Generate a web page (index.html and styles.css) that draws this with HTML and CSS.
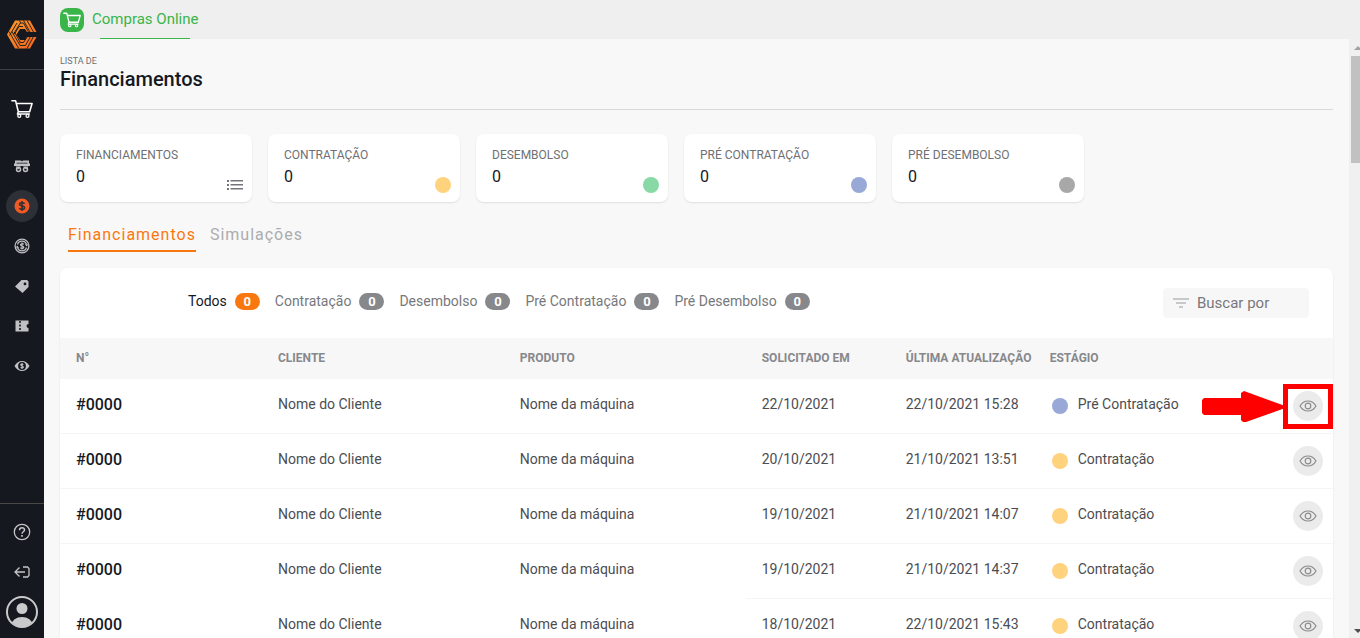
FILE: index.html
```html
<!DOCTYPE html>
<html lang="pt-BR">
<head>
  <meta charset="UTF-8" />
  <meta name="viewport" content="width=device-width, initial-scale=1.0"/>
  <title>Financiamentos - Compras Online</title>
  <link rel="stylesheet" href="styles.css">
</head>
<body>
  <!-- Icons used more than once -->
  <svg class="sprite" aria-hidden="true">
    <symbol id="cart" viewBox="0 0 24 24">
      <path d="M1 3h4l3 12h12.500M5.700 6H23l-2.500 8.500M8 15l-1 2.500h13" fill="none" stroke="currentColor" stroke-width="1.700" stroke-linejoin="round" stroke-linecap="round"/>
      <circle cx="9" cy="19.500" r="1.600" fill="none" stroke="currentColor" stroke-width="1.400"/>
      <circle cx="18" cy="19.500" r="1.600" fill="none" stroke="currentColor" stroke-width="1.400"/>
    </symbol>
    <symbol id="eye" viewBox="0 0 18 12">
      <path d="M1 6C3 2.600 5.700 1 9 1s6 1.600 8 5c-2 3.400-4.700 5-8 5S3 9.400 1 6z" fill="none" stroke="currentColor" stroke-width="1.200"/>
      <circle cx="9" cy="6" r="2.800" fill="none" stroke="currentColor" stroke-width="1.200"/>
    </symbol>
  </svg>

  <nav class="sidebar" aria-label="Menu principal">
    <a href="#" class="logo" aria-label="Início">
      <svg width="30" height="29" viewBox="0 0 30 29">
        <defs>
          <linearGradient id="logoFill" x1="0" y1="0" x2="1" y2="1">
            <stop offset="0" stop-color="#fb9a2a"/>
            <stop offset="1" stop-color="#f0641e"/>
          </linearGradient>
        </defs>
        <path fill="url(#logoFill)" d="M8 .5h15l6.500 11.500h-9.500L18 9h-5l-3.500 5.500L13 20h5l2-3h9.500L23 28.500H8l-8-14z"/>
        <g fill="none" stroke="#15181f" stroke-width=".9">
          <path d="M12.500 .5l1 2.200L6 15M10 3L2.500 15.500M16 6.500h-4L7.500 14"/>
          <path d="M13 3h3.500l5 9M16.500 .5l6.500 11.500M20 .5l6.500 11.500"/>
          <path d="M2 11.500L11.500 28M5 11.500l8 14M7.500 12l5.500 10"/>
          <path d="M12.500 22.500h4l4-6M13 25.500h5.500l5-9M20 28.500l6.500-12"/>
        </g>
      </svg>
    </a>
    <a href="#" class="shop" aria-label="Compras">
      <svg width="22" height="22"><use href="#cart"/></svg>
    </a>
    <div class="menu">
      <a href="#" aria-label="Máquinas">
        <svg width="16" height="16" viewBox="0 0 16 16" fill="#bfc1c4">
          <path d="M1 2.500h6l1 1 1-1h6v3h1v2.500H0V5.500h1z"/>
          <path d="M2.500 5.200h11" stroke="#15181f" stroke-width=".8"/>
          <path d="M1.500 8.500H7L4 11.500zM14.500 8.500H9l3 3z"/>
          <circle cx="4.500" cy="11.500" r="2" fill="none" stroke="#bfc1c4" stroke-width="1.500"/>
          <circle cx="11.500" cy="11.500" r="2" fill="none" stroke="#bfc1c4" stroke-width="1.500"/>
        </svg>
      </a>
      <a href="#" class="active" aria-label="Financiamentos">
        <svg width="16" height="16" viewBox="0 0 16 16">
          <circle cx="8" cy="8" r="7.500" fill="#f15a24"/>
          <path d="M10.500 5.800C10 4.900 9.200 4.700 8 4.700c-1.500 0-2.500.5-2.500 1.600C5.500 8.800 10.600 7 10.600 9.700c0 1.100-1.100 1.700-2.600 1.700-1.300 0-2.200-.5-2.600-1.400M8 3v10" fill="none" stroke="#2d3036" stroke-width="1.500"/>
        </svg>
      </a>
      <a href="#" aria-label="Consórcios">
        <svg width="16" height="16" viewBox="0 0 16 16" fill="none" stroke="#bfc1c4">
          <circle cx="8" cy="8" r="6.900" stroke-width="1.300"/>
          <path d="M3.500 9.500a4.700 4.700 0 0 0 9 0M12.500 6.500a4.700 4.700 0 0 0-9 0" stroke-width="1.200"/>
          <path d="M1.500 9.500l2-2 1.500 2.500zM14.500 6.500l-2 2L11 6z" fill="#bfc1c4" stroke="none"/>
          <path d="M9.800 6.400C8.500 5 6.300 5.800 6.500 7c.2 1.300 3.300.8 3.300 2.200 0 1.200-2.400 1.600-3.500.4M8 4.500v7" stroke-width="1.200"/>
        </svg>
      </a>
      <a href="#" aria-label="Ofertas">
        <svg width="16" height="16" viewBox="0 0 16 16">
          <path fill="#bfc1c4" fill-rule="evenodd" d="M7.500 2H13l1.500 1.500V9L8.500 15 1 8.500zM11 4.500a1.400 1.400 0 1 0 0 2.800 1.400 1.400 0 0 0 0-2.800z"/>
        </svg>
      </a>
      <a href="#" aria-label="Cupons">
        <svg width="16" height="16" viewBox="0 0 16 16">
          <path fill="#bfc1c4" d="M1.500 2.500h13v3.500a2 2 0 0 0 0 4v3.500h-13z"/>
          <path d="M6 3v10.500" stroke="#15181f" stroke-width="1.600" stroke-dasharray="2 1.500"/>
        </svg>
      </a>
      <a href="#" aria-label="Acompanhar">
        <svg width="16" height="16" viewBox="0 0 16 16">
          <path fill="#bfc1c4" d="M.5 8C2.500 4.500 5 3 8 3s5.500 1.500 7.500 5c-2 3.500-4.500 5-7.500 5S2.500 11.500.5 8z"/>
          <circle cx="8" cy="8" r="3.900" fill="#15181f"/>
          <path d="M9.400 6.600C8.300 5.500 6.600 6 6.700 7c.1 1.100 2.700.8 2.700 2 0 1-1.900 1.300-2.800.3M8 5v6" fill="none" stroke="#bfc1c4" stroke-width="1.100"/>
        </svg>
      </a>
    </div>
    <div class="menu menu-bottom">
      <a href="#" aria-label="Ajuda">
        <svg width="18" height="18" viewBox="0 0 18 18" fill="none" stroke="#c4c5c7" stroke-width="1.300">
          <circle cx="9" cy="9" r="7.700"/>
          <path d="M6.500 7.200C6.500 5.600 7.600 4.700 9 4.700s2.500.9 2.500 2.200c0 1.800-2.500 1.900-2.500 3.800" stroke-width="1.500"/>
          <path d="M9 12v1.700" stroke-width="1.700"/>
        </svg>
      </a>
      <a href="#" aria-label="Sair">
        <svg width="16" height="16" viewBox="0 0 16 16" fill="none" stroke="#c4c5c7" stroke-width="1.300">
          <path d="M11 8H1M5.500 3.500L1 8l4.500 4.500M9 3h4.500l1.500 1.500v7L13.500 13H9"/>
        </svg>
      </a>
      <a href="#" aria-label="Meu perfil">
        <svg width="32" height="32" viewBox="0 0 32 32">
          <defs><clipPath id="face"><circle cx="16" cy="16" r="14.500"/></clipPath></defs>
          <circle cx="16" cy="16" r="15" fill="none" stroke="#c9cacb" stroke-width="2"/>
          <circle cx="16" cy="12.500" r="5.500" fill="#c9cacb"/>
          <ellipse cx="16" cy="29" rx="10.500" ry="8" fill="#c9cacb" clip-path="url(#face)"/>
        </svg>
      </a>
    </div>
  </nav>

  <div class="page">
    <header class="topbar">
      <a href="#" class="app-link">
        <span class="app-icon"><svg width="18" height="18"><use href="#cart"/></svg></span>
        <span class="app-name">Compras Online</span>
      </a>
    </header>

    <div class="scroll-area">
      <main class="content">
        <div class="heading">
          <p>LISTA DE</p>
          <h1>Financiamentos</h1>
        </div>

        <section class="cards">
          <div class="card">
            <h2>FINANCIAMENTOS</h2>
            <div class="card-value">0</div>
            <svg class="card-mark" width="16" height="16" viewBox="0 0 16 16" fill="#77737c">
              <path d="M0 3h2v2H0zM0 7h2v2H0zM0 11h2v2H0zM3.500 3H16v1.600H3.500zM3.500 7H16v1.600H3.500zM3.500 11H16v1.600H3.500z"/>
            </svg>
          </div>
          <div class="card">
            <h2>CONTRATAÇÃO</h2>
            <div class="card-value">0</div>
            <span class="card-mark dot yellow"></span>
          </div>
          <div class="card">
            <h2>DESEMBOLSO</h2>
            <div class="card-value">0</div>
            <span class="card-mark dot green"></span>
          </div>
          <div class="card">
            <h2>PRÉ CONTRATAÇÃO</h2>
            <div class="card-value">0</div>
            <span class="card-mark dot blue"></span>
          </div>
          <div class="card">
            <h2>PRÉ DESEMBOLSO</h2>
            <div class="card-value">0</div>
            <span class="card-mark dot gray"></span>
          </div>
        </section>

        <div class="tabs">
          <a href="#" class="active">Financiamentos</a>
          <a href="#">Simulações</a>
        </div>

        <section class="panel">
          <div class="toolbar">
            <div class="filters">
              <button class="active">Todos <span>0</span></button>
              <button>Contratação <span>0</span></button>
              <button>Desembolso <span>0</span></button>
              <button>Pré Contratação <span>0</span></button>
              <button>Pré Desembolso <span>0</span></button>
            </div>
            <label class="search">
              <svg width="16" height="16" viewBox="0 0 16 16" fill="none" stroke="#98999b" stroke-width="1.200">
                <path d="M0 4h16M3 8h10M6 12h4"/>
              </svg>
              <input type="text" placeholder="Buscar por" aria-label="Buscar por">
            </label>
          </div>

          <table>
            <colgroup>
              <col class="col-number"><col class="col-name"><col class="col-name"><col class="col-date"><col class="col-date"><col><col class="col-action">
            </colgroup>
            <thead>
              <tr>
                <th>N°</th>
                <th>CLIENTE</th>
                <th>PRODUTO</th>
                <th>SOLICITADO EM</th>
                <th>ÚLTIMA ATUALIZAÇÃO</th>
                <th>ESTÁGIO</th>
                <th></th>
              </tr>
            </thead>
            <tbody>
              <tr>
                <td class="number">#0000</td>
                <td>Nome do Cliente</td>
                <td>Nome da máquina</td>
                <td>22/10/2021</td>
                <td>22/10/2021 15:28</td>
                <td><span class="stage"><span class="dot blue"></span>Pré Contratação</span></td>
                <td class="action">
                  <button aria-label="Visualizar"><svg width="18" height="12"><use href="#eye"/></svg></button>
                  <svg class="arrow" width="86" height="32" viewBox="0 0 86 32"><path fill="#fe0000" d="M2 7h37V2l3-2 44 16-42 15h-3l-2-2v-5H2l-2-2V9z"/></svg>
                  <span class="highlight"></span>
                </td>
              </tr>
              <tr>
                <td class="number">#0000</td>
                <td>Nome do Cliente</td>
                <td>Nome da máquina</td>
                <td>20/10/2021</td>
                <td>21/10/2021 13:51</td>
                <td><span class="stage"><span class="dot yellow"></span>Contratação</span></td>
                <td class="action"><button aria-label="Visualizar"><svg width="18" height="12"><use href="#eye"/></svg></button></td>
              </tr>
              <tr>
                <td class="number">#0000</td>
                <td>Nome do Cliente</td>
                <td>Nome da máquina</td>
                <td>19/10/2021</td>
                <td>21/10/2021 14:07</td>
                <td><span class="stage"><span class="dot yellow"></span>Contratação</span></td>
                <td class="action"><button aria-label="Visualizar"><svg width="18" height="12"><use href="#eye"/></svg></button></td>
              </tr>
              <tr class="open">
                <td class="number">#0000</td>
                <td>Nome do Cliente</td>
                <td>Nome da máquina</td>
                <td>19/10/2021</td>
                <td>21/10/2021 14:37</td>
                <td><span class="stage"><span class="dot yellow"></span>Contratação</span></td>
                <td class="action"><button aria-label="Visualizar"><svg width="18" height="12"><use href="#eye"/></svg></button></td>
              </tr>
              <tr>
                <td class="number">#0000</td>
                <td>Nome do Cliente</td>
                <td>Nome da máquina</td>
                <td>18/10/2021</td>
                <td>22/10/2021 15:43</td>
                <td><span class="stage"><span class="dot yellow"></span>Contratação</span></td>
                <td class="action"><button aria-label="Visualizar"><svg width="18" height="12"><use href="#eye"/></svg></button></td>
              </tr>
            </tbody>
          </table>
        </section>
      </main>

      <div class="scrollbar" aria-hidden="true">
        <svg width="10" height="17" viewBox="0 0 10 17"><path fill="#a3a3a3" d="M3 11l4-4 4 4z"/></svg>
        <div class="track"><div class="thumb"></div></div>
        <svg width="10" height="17" viewBox="0 0 10 17"><path fill="#505050" d="M3 8h8l-4 4z"/></svg>
      </div>
    </div>
  </div>
</body>
</html>
```

FILE: styles.css
```css
* {
  box-sizing: border-box;
}

body {
  margin: 0;
  height: 100vh;
  display: flex;
  overflow: hidden;
  background: #f8f8f8;
  color: #4c4d52;
  font-family: Roboto, "Liberation Sans", sans-serif;
  font-size: 14px;
}

a {
  text-decoration: none;
}

button {
  font: inherit;
  color: inherit;
  background: none;
  border: none;
  padding: 0;
  cursor: pointer;
}

.sprite {
  display: none;
}

/* Sidebar */
.sidebar {
  width: 44px;
  flex-shrink: 0;
  background: #15181f;
  display: flex;
  flex-direction: column;
}

.sidebar a {
  display: flex;
  align-items: center;
  justify-content: center;
}

.sidebar .logo {
  height: 70px;
  border-bottom: 1px solid #3e4045;
}

.sidebar .shop {
  height: 76px;
  padding-top: 2px;
  color: #fff;
}

.menu a {
  width: 32px;
  height: 32px;
  margin: 4px auto 8px;
  border-radius: 50%;
}

.menu a.active {
  background: #2d3036;
}

.menu-bottom {
  margin-top: auto;
  padding-top: 8px;
  border-top: 1px solid #4a4846;
}

.menu-bottom a:last-child {
  margin-bottom: 10px;
}

/* Top bar */
.page {
  flex: 1;
  min-width: 0;
  display: flex;
  flex-direction: column;
}

.topbar {
  height: 39px;
  flex-shrink: 0;
  padding-left: 16px;
  background: #efefef;
}

.app-link {
  display: inline-flex;
  align-items: center;
  gap: 8px;
  height: 39px;
  color: #39b54a;
  font-size: 15px;
}

.app-icon {
  width: 24px;
  height: 24px;
  border-radius: 8px;
  background: #39b54a;
  color: #fff;
  display: flex;
  align-items: center;
  justify-content: center;
}

.app-name {
  position: relative;
  line-height: 39px;
}

.app-name::after {
  content: "";
  position: absolute;
  left: 8px;
  right: 8px;
  bottom: 0;
  height: 1px;
  background: #39b54a;
}

.scroll-area {
  flex: 1;
  min-height: 0;
  display: flex;
}

.content {
  flex: 1;
  min-width: 0;
  padding: 16px 16px 0;
  overflow: hidden;
}

/* Heading */
.heading {
  padding-bottom: 18px;
  border-bottom: 1px solid #d9d9d9;
}

.heading p {
  margin: 0;
  font-size: 9px;
  line-height: 12px;
  color: #6f7074;
}

.heading h1 {
  margin: 0;
  font-size: 20px;
  font-weight: 500;
  line-height: 24px;
  color: #15181f;
}

/* Cards */
.cards {
  display: flex;
  gap: 16px;
  margin-top: 24px;
}

.card {
  position: relative;
  width: 192px;
  height: 68px;
  padding: 12px 16px;
  background: #fff;
  border-radius: 8px;
  box-shadow: 0 1px 2px rgba(0, 0, 0, 0.1);
}

.card h2 {
  margin: 0;
  font-size: 12px;
  font-weight: 400;
  line-height: 18px;
  color: #6f7074;
}

.card-value {
  font-size: 16px;
  line-height: 26px;
  color: #15181f;
}

.card-mark {
  position: absolute;
  right: 9px;
  bottom: 9px;
}

.dot {
  width: 16px;
  height: 16px;
  border-radius: 50%;
}

.yellow { background: #ffd37d; }
.green { background: #89d9a6; }
.blue { background: #98a9d8; }
.gray { background: #a8a8a8; }

/* Tabs */
.tabs {
  display: flex;
  gap: 14px;
  margin: 18px 8px 16px;
}

.tabs a {
  font-size: 16px;
  line-height: 30px;
  letter-spacing: 1px;
  color: #acacae;
  border-bottom: 2px solid transparent;
}

.tabs a.active {
  color: #f8780f;
  border-bottom-color: #f8780f;
}

/* Panel */
.panel {
  background: #fff;
  border-radius: 8px;
  box-shadow: 0 1px 2px rgba(0, 0, 0, 0.1);
}

.toolbar {
  display: flex;
  align-items: center;
  justify-content: space-between;
  height: 70px;
  padding: 0 24px 0 128px;
}

.filters {
  display: flex;
  gap: 15px;
  padding-bottom: 4px;
}

.filters button {
  display: flex;
  align-items: center;
  gap: 8px;
  color: #77787b;
}

.filters span {
  width: 25px;
  border-radius: 9px;
  background: #87888c;
  color: #fff;
  font-size: 13px;
  font-weight: 700;
  line-height: 17px;
}

.filters .active {
  color: #15181f;
}

.filters .active span {
  background: #f8780f;
}

.search {
  display: flex;
  align-items: center;
  gap: 8px;
  width: 146px;
  height: 30px;
  padding: 0 10px;
  border-radius: 4px;
  background: #f7f7f7;
}

.search svg {
  flex-shrink: 0;
}

.search input {
  width: 100%;
  min-width: 0;
  padding: 0;
  border: none;
  outline: none;
  background: none;
  font: inherit;
  font-size: 15px;
}

.search input::placeholder {
  color: #77787b;
}

/* Table */
table {
  width: 100%;
  table-layout: fixed;
  border-collapse: separate;
  border-spacing: 0;
}

.col-number { width: 202px; }
.col-name { width: 19%; }
.col-date { width: 144px; }
.col-action { width: 56px; }

th {
  height: 41px;
  padding: 0 0 2px 16px;
  background: #f7f7f7;
  color: #87888c;
  font-size: 12px;
  font-weight: 700;
  text-align: left;
  white-space: nowrap;
}

td {
  height: 55px;
  padding: 0 0 4px 16px;
  border-bottom: 1px solid #f5f5f5;
  white-space: nowrap;
}

.number {
  color: #15181f;
  font-size: 16px;
  font-weight: 500;
}

.open td:nth-child(-n+3) {
  border-bottom-color: transparent;
}

.stage {
  display: flex;
  align-items: center;
  gap: 10px;
  padding-left: 2px;
}

.stage .dot {
  margin-top: 4px;
}

.action {
  position: relative;
  padding: 0 10px 0 0;
}

.action button {
  display: flex;
  align-items: center;
  justify-content: center;
  width: 30px;
  height: 30px;
  margin-left: auto;
  border-radius: 50%;
  background: #ebebeb;
  color: #8b8b8b;
}

/* Callout over the first row's button */
.highlight {
  position: absolute;
  top: 5px;
  right: 0;
  width: 50px;
  height: 45px;
  border: 5px solid #fe0000;
  pointer-events: none;
}

.arrow {
  position: absolute;
  top: 12px;
  right: 45px;
}

/* Scrollbar */
.scrollbar {
  display: flex;
  flex-direction: column;
  width: 11px;
  padding-left: 2px;
  background: #f0f0f0;
}

.track {
  flex: 1;
}

.thumb {
  height: 19%;
  background: #c1c1c1;
}
```
